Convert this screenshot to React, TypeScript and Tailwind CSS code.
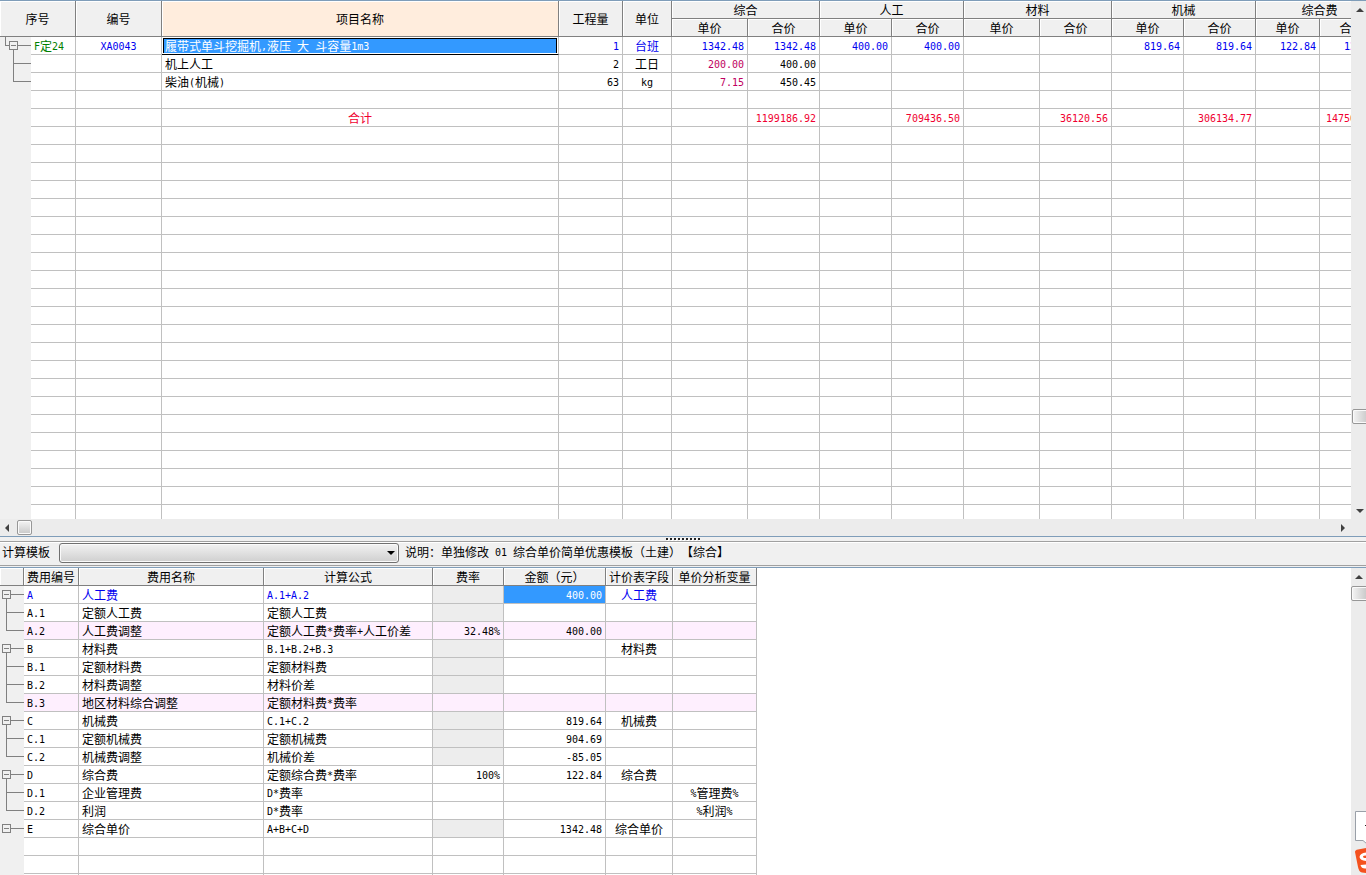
import { useState } from "react";
import clsx from "clsx";

type Tree = "root" | "open" | "single" | "mid" | "last" | "none";

// latin runs are half the width of a CJK glyph, as in a fixed-pitch grid font
const Txt = ({ children }: { children: string }) => (
    <>
        {children.split(/([\x20-\x7e]+)/).map((part, i) =>
            i % 2 ? (
                <span
                    key={i}
                    className="align-[1px] font-['DejaVu_Sans_Mono','Liberation_Mono',monospace] text-[10px] leading-none"
                >
                    {part}
                </span>
            ) : (
                part
            )
        )}
    </>
);

const TreeMark = ({ kind, width, x }: { kind: Tree; width: number; x: number }) => {
    const box = kind === "root" || kind === "open" || kind === "single";
    return (
        <svg
            width={width}
            height="18"
            viewBox={`0 0 ${width} 18`}
            className="block"
            stroke="#808080"
            fill="none"
            shapeRendering="crispEdges"
        >
            {kind === "root" && <path d="M5.5 0V8.5H9" />}
            {box && (
                <>
                    <rect x={x - 3.5} y="4.5" width="8" height="8" />
                    <path d={`M${x - 2} 8.5H${x + 3}M${x + 5} 8.5H${width}`} />
                    {kind !== "single" && <path d={`M${x + 0.5} 13V18`} />}
                </>
            )}
            {kind === "mid" && <path d={`M${x + 0.5} 0V18M${x} 8.5H${width}`} />}
            {kind === "last" && <path d={`M${x + 0.5} 0V9M${x} 8.5H${width}`} />}
        </svg>
    );
};

const Arrow = ({ dir }: { dir: "up" | "down" | "left" | "right" }) => {
    const paths = {
        up: "M0 6L4 2L8 6Z",
        down: "M0 2L4 6L8 2Z",
        left: "M6 0L2 4L6 8Z",
        right: "M2 0L6 4L2 8Z",
    };
    return (
        <svg width="8" height="8" viewBox="0 0 8 8" className="shrink-0">
            <path d={paths[dir]} fill="#404040" />
        </svg>
    );
};

const scrollBtn = "flex shrink-0 items-center justify-center";
const thumb =
    "shrink-0 rounded-[2px] border border-[#979797] shadow-[inset_0_0_0_1px_#fafafa]";
const head =
    "h-[18px] border-r border-b border-[#808080] bg-[#f0f0f0] p-0 text-center font-normal shadow-[inset_1px_1px_0_#fff]";
const cell = "h-[18px] border-r border-b border-[#c0c0c0] px-[3px] py-0";

const topCols = [31, 45, 86, 397, 64, 49, 76, 72, 72, 72, 76, 72, 72, 72, 64, 64];
const groups = ["综合", "人工", "材料", "机械", "综合费"];

const aligns = [
    "text-left",
    "text-center",
    "text-left",
    "text-right",
    "text-center",
    ...Array(10).fill("text-right"),
];

const topRows: { tree: Tree; color?: string; cells: string[] }[] = [
    {
        tree: "root",
        color: "text-[#0000f0]",
        cells: [
            "F定24",
            "XA0043",
            "履带式单斗挖掘机,液压 大 斗容量1m3",
            "1",
            "台班",
            "1342.48",
            "1342.48",
            "400.00",
            "400.00",
            "",
            "",
            "819.64",
            "819.64",
            "122.84",
            "122.84",
        ],
    },
    { tree: "mid", cells: ["", "", "机上人工", "2", "工日", "200.00", "400.00"] },
    { tree: "last", cells: ["", "", "柴油(机械)", "63", "kg", "7.15", "450.45"] },
    { tree: "none", cells: [] },
    {
        tree: "none",
        color: "text-[#f00030]",
        cells: [
            "",
            "",
            "合计",
            "",
            "",
            "",
            "1199186.92",
            "",
            "709436.50",
            "",
            "36120.56",
            "",
            "306134.77",
            "",
            "147500.67",
        ],
    },
    ...Array.from({ length: 22 }, () => ({ tree: "none" as Tree, cells: [] })),
];

const ItemTable = () => (
    <table className="w-[1384px] table-fixed border-separate border-spacing-0">
        <colgroup>
            {topCols.map((w, i) => (
                <col key={i} style={{ width: w }} />
            ))}
        </colgroup>
        <thead>
            <tr>
                <th rowSpan={2} colSpan={2} className={head}>序号</th>
                <th rowSpan={2} className={head}>编号</th>
                <th rowSpan={2} className={clsx(head, "bg-[#ffeddd]")}>项目名称</th>
                <th rowSpan={2} className={head}>工程量</th>
                <th rowSpan={2} className={head}>单位</th>
                {groups.map((g) => (
                    <th key={g} colSpan={2} className={head}>{g}</th>
                ))}
            </tr>
            <tr>
                {groups.flatMap((g) => [
                    <th key={g + "1"} className={head}>单价</th>,
                    <th key={g + "2"} className={head}>合价</th>,
                ])}
            </tr>
        </thead>
        <tbody>
            {topRows.map((row, r) => (
                <tr key={r} className={row.color}>
                    <td className="h-[18px] bg-[#f0f0f0] p-0">
                        <TreeMark kind={row.tree} width={31} x={13} />
                    </td>
                    {aligns.map((align, c) => {
                        const text = row.cells[c] ?? "";
                        if (r === 0 && c === 2) {
                            return (
                                <td key={c} className="h-[18px] border-r border-b border-r-[#c0c0c0] border-b-black p-0">
                                    <div className="mx-px h-[15px] border border-b-0 border-black bg-[#3399ff] px-px leading-[13px] text-white">
                                        <Txt>{text}</Txt>
                                    </div>
                                </td>
                            );
                        }
                        return (
                            <td
                                key={c}
                                className={clsx(
                                    cell,
                                    r === 4 && c === 2 ? "text-center" : align,
                                    r === 0 && c === 0 && "text-[#008000]",
                                    (r === 1 || r === 2) && c === 5 && "text-[#c00060]"
                                )}
                            >
                                <Txt>{text}</Txt>
                            </td>
                        );
                    })}
                </tr>
            ))}
        </tbody>
    </table>
);

const feeCols = [24, 55, 185, 169, 71, 102, 67, 84];
const feeHeads = ["", "费用编号", "费用名称", "计算公式", "费率", "金额（元）", "计价表字段", "单价分析变量"];
const feeAligns = [
    "text-left",
    "text-left",
    "text-left",
    "text-right",
    "text-right",
    "text-center",
    "text-center",
];

const feeRows: { tree: Tree; pink?: boolean; cells: string[]; grey?: boolean }[] = [
    { tree: "open", grey: true, cells: ["A", "人工费", "A.1+A.2", "", "400.00", "人工费"] },
    { tree: "mid", grey: true, cells: ["A.1", "定额人工费", "定额人工费"] },
    { tree: "last", pink: true, cells: ["A.2", "人工费调整", "定额人工费*费率+人工价差", "32.48%", "400.00"] },
    { tree: "open", grey: true, cells: ["B", "材料费", "B.1+B.2+B.3", "", "", "材料费"] },
    { tree: "mid", grey: true, cells: ["B.1", "定额材料费", "定额材料费"] },
    { tree: "mid", grey: true, cells: ["B.2", "材料费调整", "材料价差"] },
    { tree: "last", pink: true, cells: ["B.3", "地区材料综合调整", "定额材料费*费率"] },
    { tree: "open", grey: true, cells: ["C", "机械费", "C.1+C.2", "", "819.64", "机械费"] },
    { tree: "mid", grey: true, cells: ["C.1", "定额机械费", "定额机械费", "", "904.69"] },
    { tree: "last", grey: true, cells: ["C.2", "机械费调整", "机械价差", "", "-85.05"] },
    { tree: "open", cells: ["D", "综合费", "定额综合费*费率", "100%", "122.84", "综合费"] },
    { tree: "mid", cells: ["D.1", "企业管理费", "D*费率", "", "", "", "%管理费%"] },
    { tree: "last", cells: ["D.2", "利润", "D*费率", "", "", "", "%利润%"] },
    { tree: "single", grey: true, cells: ["E", "综合单价", "A+B+C+D", "", "1342.48", "综合单价"] },
    { tree: "none", cells: [] },
    { tree: "none", cells: [] },
    { tree: "none", cells: [] },
];

const FeeTable = () => (
    <table className="w-[757px] table-fixed border-separate border-spacing-0">
        <colgroup>
            {feeCols.map((w, i) => (
                <col key={i} style={{ width: w }} />
            ))}
        </colgroup>
        <thead>
            <tr>
                {feeHeads.map((h, i) => (
                    <th key={i} className={head}>{h}</th>
                ))}
            </tr>
        </thead>
        <tbody>
            {feeRows.map((row, r) => (
                <tr key={r} className={clsx(r === 0 && "text-[#0000f0]", row.pink && "bg-[#feeffe]")}>
                    <td className="h-[18px] bg-[#f0f0f0] p-0">
                        <TreeMark kind={row.tree} width={24} x={6} />
                    </td>
                    {feeAligns.map((align, c) => (
                        <td
                            key={c}
                            className={clsx(
                                cell,
                                align,
                                c === 3 && row.grey && "bg-[#ededed]",
                                r === 0 && c === 4 && "bg-[#3399ff] text-white"
                            )}
                        >
                            <Txt>{row.cells[c] ?? ""}</Txt>
                        </td>
                    ))}
                </tr>
            ))}
        </tbody>
    </table>
);

const App = () => {
    const [template, setTemplate] = useState("");

    return (
        <div className="relative flex h-screen flex-col overflow-hidden bg-[#f0f0f0] font-['Noto_Sans_CJK_SC',sans-serif] text-[12px] leading-[17px] whitespace-pre text-black [text-spacing-trim:space-all]">
            <section className="flex min-h-0 flex-1 flex-col border-t border-b border-[#7f9db9]">
                <div className="flex min-h-0 flex-1">
                    <div className="min-w-0 flex-1 overflow-hidden bg-white">
                        <ItemTable />
                    </div>
                    <div className="flex w-[15px] flex-col overflow-hidden bg-[#ececec] pl-px">
                        <button aria-label="向上滚动" className={clsx(scrollBtn, "h-[17px] w-[16px]")}>
                            <Arrow dir="up" />
                        </button>
                        <div className="flex-5" />
                        <div className={clsx(thumb, "h-[15px] w-[17px] bg-linear-to-r from-[#f4f4f4] to-[#c8c8c8]")} />
                        <div className="flex-1" />
                        <button aria-label="向下滚动" className={clsx(scrollBtn, "h-[17px] w-[16px]")}>
                            <Arrow dir="down" />
                        </button>
                    </div>
                </div>
                <div className="flex h-[17px] items-center bg-[#ececec] pr-[15px]">
                    <button aria-label="向左滚动" className={clsx(scrollBtn, "h-[17px] w-[17px] pr-1")}>
                        <Arrow dir="left" />
                    </button>
                    <div className={clsx(thumb, "h-[15px] w-[15px] bg-linear-to-b from-[#f4f4f4] to-[#c8c8c8]")} />
                    <div className="flex-1" />
                    <button aria-label="向右滚动" className={clsx(scrollBtn, "h-[17px] w-[17px]")}>
                        <Arrow dir="right" />
                    </button>
                </div>
            </section>

            <div className="flex h-[5px] items-center justify-center border-b border-[#a0a0a0]">
                <svg width="34" height="3" className="block" shapeRendering="crispEdges">
                    {Array.from({ length: 9 }, (_, i) => (
                        <g key={i}>
                            <rect x={i * 4 + 1} y="1" width="2" height="2" fill="#fff" />
                            <rect x={i * 4} y="0" width="2" height="2" fill="#202020" />
                        </g>
                    ))}
                </svg>
            </div>

            <div className="flex h-[24px] items-start border-t border-b border-t-white border-b-[#a0a0a0] pl-[2px]">
                <label htmlFor="template" className="w-[57px]">计算模板</label>
                <div className="relative mr-[6px] h-[20px] w-[340px]">
                    <select
                        id="template"
                        value={template}
                        onChange={(e) => setTemplate(e.target.value)}
                        className="block h-full w-full appearance-none rounded-[3px] border border-[#707070] bg-linear-to-b from-[#f2f2f2] to-[#cfcfcf] px-1 shadow-[inset_0_0_0_1px_#fafafa]"
                    >
                        <option value=""></option>
                    </select>
                    <svg width="8" height="4" viewBox="0 0 8 4" className="pointer-events-none absolute top-2 right-1">
                        <path d="M0 0H8L4 4Z" fill="#000" />
                    </svg>
                </div>
                <p>
                    <Txt>说明：单独修改 01 综合单价简单优惠模板（土建）【综合】</Txt>
                </p>
            </div>

            <section className="mt-px flex h-[308px] shrink-0 border-t border-[#7f9db9]">
                <div className="min-w-0 flex-1 overflow-hidden bg-white">
                    <FeeTable />
                </div>
                <div className="flex w-[15px] flex-col overflow-hidden bg-[#ececec]">
                    <button aria-label="向上滚动" className={clsx(scrollBtn, "h-[18px] w-[16px]")}>
                        <Arrow dir="up" />
                    </button>
                    <div className={clsx(thumb, "h-[15px] w-[17px] bg-linear-to-r from-[#f4f4f4] to-[#c8c8c8]")} />
                </div>
            </section>

            {/* floating input-method badge */}
            <svg
                width="11"
                height="64"
                viewBox="0 0 11 64"
                className="absolute right-0 bottom-0"
            >
                <path d="M12 0.5H0.5V29.5H8L12 33" fill="#fff" stroke="#9aa0a8" />
                <path d="M10 14.5H11" stroke="#222" />
                <path d="M0 41Q0 39 3 38.5L11 37V62L7 61.5Q4 61 3 56Z" fill="#f4511e" />
                <path d="M11 41.5Q5 42 4.5 46Q5 49.5 11 50V47Q8 47 8 45.5Q8 44.5 11 44.5Z" fill="#fff" />
                <path d="M5.5 54L11 53.5V57.5Q6.5 58 5.5 54Z" fill="#fff" />
            </svg>
        </div>
    );
};

export default App;
